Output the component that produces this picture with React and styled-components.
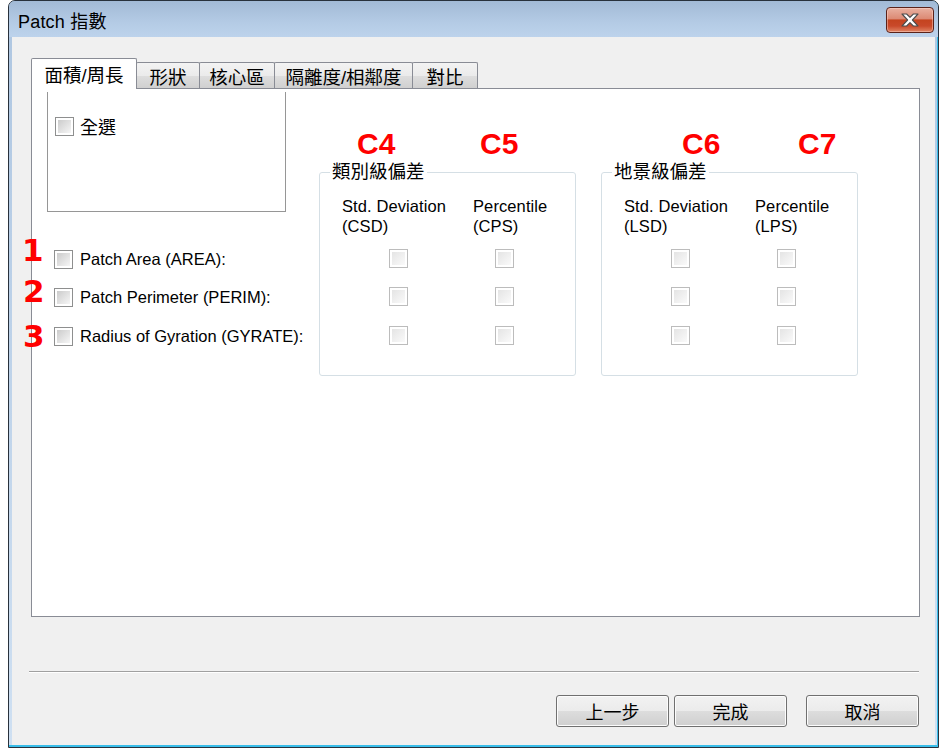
import React from 'react'
import styled, { createGlobalStyle } from 'styled-components'

const GlobalStyle = createGlobalStyle`
  html, body {
    margin: 0;
    padding: 0;
    background: #fff;
  }
  body {
    font-family: "Liberation Sans", "Noto Sans CJK TC", sans-serif;
    font-size: 16.5px;
    color: #000;
  }
`

const Page = styled.div`
  position: relative;
  width: 940px;
  height: 750px;
  overflow: hidden;
`

const Window = styled.div`
  margin-left: 8px;
  width: 931px;
  height: 748px;
  box-sizing: border-box;
  border: 1px solid #28313c;
  border-radius: 7px 7px 0 0;
  overflow: hidden;
  background: linear-gradient(#aec6e1, #cfe0f2);
  box-shadow: inset 0 -2px 0 #38bde9, inset -1px 0 0 #38bde9;
  display: flex;
  flex-direction: column;
`

const TitleBar = styled.div`
  height: 36px;
  flex: none;
  display: flex;
  align-items: center;
  justify-content: space-between;
  padding: 2px 4px 0 9px;
  box-sizing: border-box;
  background: linear-gradient(#a2bad6, #b4cbe5 60%, #bdd3ec);
`

const Title = styled.div`
  font-size: 18px;
  letter-spacing: 0.2px;
`

const CloseButton = styled.div`
  width: 48px;
  height: 26px;
  box-sizing: border-box;
  border: 1px solid #5b2219;
  border-radius: 4px;
  display: flex;
  align-items: center;
  justify-content: center;
  background: linear-gradient(
    #e9b0a0,
    #dc8a74 45%,
    #c4431f 50%,
    #c9492a 75%,
    #e08565
  );
  box-shadow: inset 0 0 0 1px rgba(255, 220, 210, 0.45);
`

const Body = styled.div`
  flex: 1;
  margin: 0 3px 2px 3px;
  background: #f0f0f0;
  padding: 21px 15px 17px 19px;
  display: flex;
  flex-direction: column;
`

const TabRow = styled.div`
  height: 30px;
  display: flex;
  align-items: flex-end;
`

const Tab = styled.div`
  box-sizing: border-box;
  width: ${p => p.$w}px;
  height: ${p => (p.$active ? 31 : 26)}px;
  margin-bottom: ${p => (p.$active ? -1 : 0)}px;
  margin-left: ${p => (p.$first ? 0 : -1)}px;
  border: 1px solid #898c95;
  border-bottom: none;
  border-radius: 2px 2px 0 0;
  background: ${p =>
    p.$active
      ? '#fff'
      : 'linear-gradient(#f3f3f3, #ebebeb 50%, #dedede 50%, #d0d0d0)'};
  position: relative;
  z-index: ${p => (p.$active ? 2 : 1)};
  display: flex;
  align-items: center;
  justify-content: center;
  font-size: 18.5px;
`

const Panel = styled.div`
  height: 529px;
  box-sizing: border-box;
  border: 1px solid #898c95;
  background: #fff;
  display: flex;
  align-items: flex-start;
`

const LeftColumn = styled.div`
  width: 287px;
  flex: none;
`

const ListBox = styled.div`
  margin: 3px 0 0 15px;
  width: 239px;
  height: 120px;
  box-sizing: border-box;
  border: 1px solid #969696;
  border-top: none;
  padding: 21px 0 0 7px;
`

const ListItem = styled.div`
  display: flex;
  align-items: center;
  gap: 6px;
  font-size: 18px;
`

const MetricRows = styled.div`
  margin-top: 28px;
`

const MetricRow = styled.div`
  height: 38.5px;
  display: flex;
  align-items: center;
  gap: 7px;
  padding-left: 22px;
`

const Check = styled.span`
  display: inline-block;
  flex: none;
  box-sizing: border-box;
  width: 19px;
  height: 19px;
  padding: 2px;
  border: 1px solid ${p => (p.$disabled ? '#bcbcbc' : '#8e8f8f')};
  background: ${p =>
      p.$disabled
        ? 'linear-gradient(135deg, #e4e4e4, #fafafa)'
        : 'linear-gradient(135deg, #cbcbcb, #f6f6f6)'}
    content-box,
    #fff;
`

const Group = styled.fieldset`
  margin: 73px 0 0 ${p => p.$offset}px;
  padding: 0 0 20px 0;
  width: 257px;
  min-width: 0;
  box-sizing: border-box;
  border: 1px solid #d5dfe5;
  border-radius: 3px;
`

const Legend = styled.legend`
  margin-left: 10px;
  padding: 0 2px;
  font-size: 18.5px;
  line-height: 20px;
`

const HeaderGrid = styled.div`
  margin-top: 14px;
  padding-left: 22px;
  display: grid;
  grid-template-columns: 131px 1fr;
  line-height: 20px;
  letter-spacing: 0.1px;
`

const CheckGrid = styled.div`
  margin-top: 3px;
`

const CheckRow = styled.div`
  height: 38.5px;
  padding-left: 69px;
  display: grid;
  grid-template-columns: 106px 1fr;
  align-items: center;
`

const Separator = styled.div`
  margin: 54px 1px 0 -2px;
  height: 1px;
  background: #a0a0a0;
  border-bottom: 1px solid #fff;
`

const ButtonRow = styled.div`
  margin-top: 22px;
  display: flex;
  justify-content: flex-end;
  padding-right: 1px;
`

const Button = styled.div`
  width: 113px;
  height: 32px;
  box-sizing: border-box;
  margin-left: ${p => p.$gap}px;
  border: 1px solid #707070;
  border-radius: 3px;
  background: linear-gradient(#f2f2f2, #ebebeb 50%, #dddddd 50%, #cfcfcf);
  box-shadow: inset 0 0 0 1px #fcfcfc;
  display: flex;
  align-items: center;
  justify-content: center;
  font-size: 18px;
`

const Mark = styled.div`
  position: absolute;
  top: ${p => p.$top}px;
  left: ${p => p.$left}px;
  color: #ff0000;
  font-weight: bold;
  line-height: 1;
  font-family: ${p =>
    p.$digit ? '"DejaVu Sans", sans-serif' : '"Liberation Sans", sans-serif'};
  font-size: ${p => (p.$digit ? 31 : 30)}px;
`

const tabs = [
  { label: '面積/周長', w: 106, active: true },
  { label: '形狀', w: 64 },
  { label: '核心區', w: 76 },
  { label: '隔離度/相鄰度', w: 139 },
  { label: '對比', w: 66 },
]

const metrics = [
  'Patch Area (AREA):',
  'Patch Perimeter (PERIM):',
  'Radius of Gyration (GYRATE):',
]

const groups = [
  { legend: '類別級偏差', cols: [['Std. Deviation', '(CSD)'], ['Percentile', '(CPS)']], offset: 0 },
  { legend: '地景級偏差', cols: [['Std. Deviation', '(LSD)'], ['Percentile', '(LPS)']], offset: 25 },
]

const marks = [
  { text: '1', top: 235, left: 22, digit: true },
  { text: '2', top: 276, left: 23, digit: true },
  { text: '3', top: 321, left: 23, digit: true },
  { text: 'C4', top: 129, left: 357 },
  { text: 'C5', top: 129, left: 480 },
  { text: 'C6', top: 129, left: 682 },
  { text: 'C7', top: 129, left: 798 },
]

function CloseIcon() {
  return (
    <svg width="22" height="16" viewBox="0 0 22 16">
      <polygon
        points="3,2 7.6,2 11,5.4 14.4,2 19,2 13.4,8 19,14 14.4,14 11,10.6 7.6,14 3,14 8.6,8"
        fill="#fff"
        stroke="#4d4d4d"
        strokeWidth="1.1"
        strokeLinejoin="round"
      />
    </svg>
  )
}

export default function App() {
  return (
    <Page>
      <GlobalStyle />
      <Window>
        <TitleBar>
          <Title>Patch 指數</Title>
          <CloseButton>
            <CloseIcon />
          </CloseButton>
        </TitleBar>
        <Body>
          <TabRow>
            {tabs.map((t, i) => (
              <Tab key={t.label} $w={t.w} $active={t.active} $first={i === 0}>
                {t.label}
              </Tab>
            ))}
          </TabRow>
          <Panel>
            <LeftColumn>
              <ListBox>
                <ListItem>
                  <Check />
                  全選
                </ListItem>
              </ListBox>
              <MetricRows>
                {metrics.map(m => (
                  <MetricRow key={m}>
                    <Check />
                    {m}
                  </MetricRow>
                ))}
              </MetricRows>
            </LeftColumn>
            {groups.map(g => (
              <Group key={g.legend} $offset={g.offset}>
                <Legend>{g.legend}</Legend>
                <HeaderGrid>
                  {g.cols.map(c => (
                    <div key={c[1]}>
                      {c[0]}
                      <br />
                      {c[1]}
                    </div>
                  ))}
                </HeaderGrid>
                <CheckGrid>
                  {metrics.map(m => (
                    <CheckRow key={m}>
                      <Check $disabled />
                      <Check $disabled />
                    </CheckRow>
                  ))}
                </CheckGrid>
              </Group>
            ))}
          </Panel>
          <Separator />
          <ButtonRow>
            <Button $gap={0}>上一步</Button>
            <Button $gap={5}>完成</Button>
            <Button $gap={19}>取消</Button>
          </ButtonRow>
        </Body>
      </Window>
      {marks.map(m => (
        <Mark key={m.text} $top={m.top} $left={m.left} $digit={m.digit}>
          {m.text}
        </Mark>
      ))}
    </Page>
  )
}
